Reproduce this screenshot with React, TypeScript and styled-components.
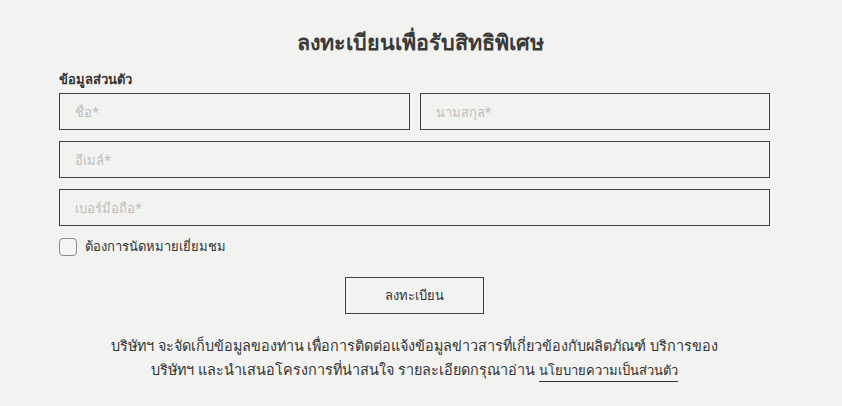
import React from "react";
import styled, { createGlobalStyle } from "styled-components";

const Global = createGlobalStyle`
  html, body { margin: 0; padding: 0; background: #f2f2f0; }
  body { font-family: "Noto Sans", "DejaVu Sans", sans-serif; color: #333; }
  * { box-sizing: border-box; }
`;

const Page = styled.div`
  width: 842px;
  height: 406px;
  background: #f2f2f0;
  padding: 24px 0 0 59px;
`;

const Form = styled.form`
  width: 711px;
  display: flex;
  flex-direction: column;
`;

const Title = styled.h2`
  margin: 0;
  text-align: center;
  font-size: 21.5px;
  font-weight: 700;
  color: #3a3a3a;
  line-height: 36px;
  padding-left: 12px;
`;

const Label = styled.div`
  margin-top: 8px;
  font-size: 13px;
  font-weight: 700;
  color: #333;
  line-height: 22px;
`;

const Row = styled.div`
  display: flex;
  gap: 10px;
  margin-top: 3px;
  & + & { margin-top: 11px; }
`;

const Input = styled.input`
  flex: 1;
  min-width: 0;
  height: 37px;
  border: 1.5px solid #404040;
  background: transparent;
  padding: 0 15px;
  font-family: inherit;
  font-size: 13px;
  color: #333;
  outline: none;
  &::placeholder { color: #bdbdbd; }
`;

const CheckRow = styled.label`
  display: flex;
  align-items: center;
  gap: 8px;
  margin-top: 10px;
  font-size: 13px;
  color: #333;
`;

const Box = styled.span`
  width: 18px;
  height: 18px;
  border: 1px solid #8a8a8a;
  border-radius: 4px;
  background: #f4f4f2;
`;

const Button = styled.button`
  align-self: center;
  margin-top: 20px;
  width: 139px;
  height: 37px;
  border: 1.5px solid #404040;
  background: transparent;
  font-family: inherit;
  font-size: 13px;
  color: #333;
`;

const Note = styled.p`
  margin: 20px 0 0;
  text-align: center;
  font-size: 14.4px;
  line-height: 24px;
  color: #333;
`;

const Link = styled.a`
  color: #333;
  text-decoration: none;
  border-bottom: 1px solid #333;
  padding-bottom: 2px;
  font-size: 13px;
  margin-left: 4px;
`;

export default function App() {
  return (
    <Page>
      <Global />
      <Form onSubmit={(e) => e.preventDefault()}>
        <Title>ลงทะเบียนเพื่อรับสิทธิพิเศษ</Title>
        <Label>ข้อมูลส่วนตัว</Label>
        <Row>
          <Input placeholder="ชื่อ*" />
          <Input placeholder="นามสกุล*" />
        </Row>
        <Row>
          <Input placeholder="อีเมล์*" />
        </Row>
        <Row>
          <Input placeholder="เบอร์มือถือ*" />
        </Row>
        <CheckRow>
          <Box />
          ต้องการนัดหมายเยี่ยมชม
        </CheckRow>
        <Button type="submit">ลงทะเบียน</Button>
        <Note>
          บริษัทฯ จะจัดเก็บข้อมูลของท่าน เพื่อการติดต่อแจ้งข้อมูลข่าวสารที่เกี่ยวข้องกับผลิตภัณฑ์ บริการของ
          <br />
          บริษัทฯ และนำเสนอโครงการที่น่าสนใจ รายละเอียดกรุณาอ่าน
          <Link href="#">นโยบายความเป็นส่วนตัว</Link>
        </Note>
      </Form>
    </Page>
  );
}
